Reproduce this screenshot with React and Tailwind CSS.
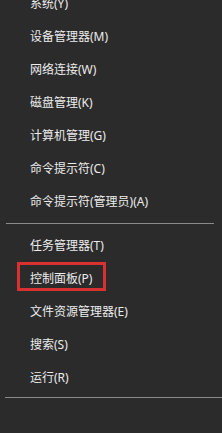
import React from "react";

const groupOne = [
  "系统(Y)",
  "设备管理器(M)",
  "网络连接(W)",
  "磁盘管理(K)",
  "计算机管理(G)",
  "命令提示符(C)",
  "命令提示符(管理员)(A)",
];

const groupTwo = [
  "任务管理器(T)",
  "控制面板(P)",
  "文件资源管理器(E)",
  "搜索(S)",
  "运行(R)",
];

const MenuRow = ({ label, marked }) => (
  <div className="relative flex h-[33px] items-center pl-[30px]">
    <span className="text-[12px] leading-none text-[#ececec]">{label}</span>
    {marked && (
      <span className="absolute left-[17px] top-0 h-[29px] w-[89px] border-[3px] border-[#d8312f]" />
    )}
  </div>
);

const App = () => {
  return (
    <div
      className="h-[433px] w-[222px] overflow-hidden bg-[#2b2b2b]"
      style={{ fontFamily: '"Noto Sans", "Noto Sans CJK SC", sans-serif' }}
    >
      <div className="mt-[-13px] flex flex-col">
        {groupOne.map((label) => (
          <MenuRow key={label} label={label} />
        ))}
        <div className="ml-[6px] mr-[8px] mt-[5px] mb-[5px] h-px bg-[#8a8a8a]" />
        {groupTwo.map((label) => (
          <MenuRow key={label} label={label} marked={label === "控制面板(P)"} />
        ))}
        <div className="ml-[5px] mt-[3px] h-px bg-[#8a8a8a]" />
      </div>
    </div>
  );
};

export default App;
